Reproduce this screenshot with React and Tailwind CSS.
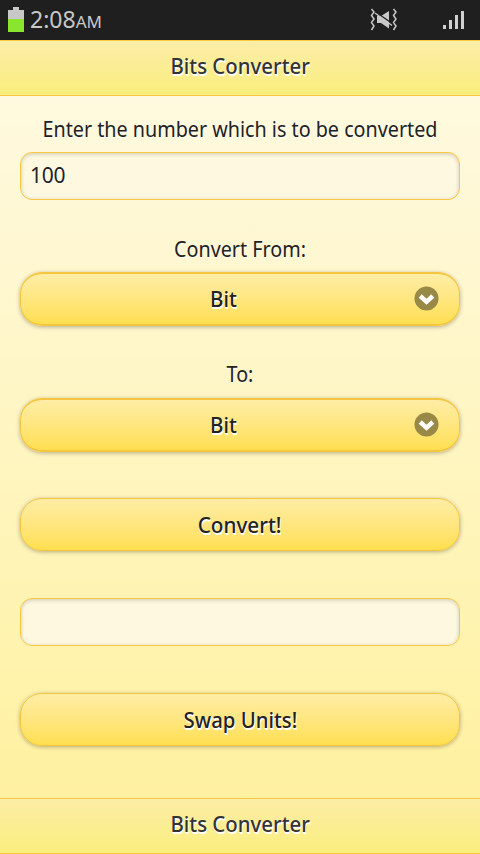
import { useState } from "react";

const buttonClass =
	"relative flex w-full items-center justify-center rounded-[22px] border-[#f4c63f] bg-gradient-to-b from-[#ffeda5] to-[#ffdf4f] text-[22px] font-medium text-[#222] shadow-[0_1px_4px_rgba(0,0,0,0.3)] [text-shadow:0_1px_0_#fff,1px_2px_0_#fff]";

const inputClass =
	"block h-12 w-full rounded-[12px] border border-[#f7c942] bg-[#fff8e0] px-[9px] pb-[2px] text-[21px] tracking-[-0.2px] text-[#222] shadow-[inset_0_1px_4px_rgba(0,0,0,0.2)] outline-none [text-shadow:0_1px_0_#fff]";

function StatusBar() {
	return (
		<div className="flex h-10 items-start bg-[#1f1f1f] text-[#c8c8c8]">
			<svg className="ml-2 mt-[7px]" width="16" height="25" shapeRendering="crispEdges">
				<path d="M5 0h6v3h5v9H0V3h5z" fill="#c8c8c8" />
				<path d="M0 12h16v13H0z" fill="#8ae52f" />
			</svg>
			<span className="ml-1.5 mt-[3px] text-[23px] leading-8">
				2:08<span className="text-[17px]">AM</span>
			</span>
			<svg
				className="ml-auto mt-[8px]"
				width="28"
				height="24"
				fill="none"
				stroke="#c8c8c8"
				strokeWidth="1.5"
			>
				<path d="M1.5 1l2.5 3-2.5 3.5 2.5 3.5-2.5 3.5 2.5 3.5-2.5 4M23.5 1l2.5 3-2.5 3.5 2.5 3.5-2.5 3.5 2.5 3.5-2.5 4" />
				<path d="M7 8h4l8-5v17.5L11 15H7z" fill="#c8c8c8" stroke="none" />
				<path d="M7 5l16 11" stroke="#1f1f1f" strokeWidth="1.5" />
				<path d="M5 5l17 12.5" />
			</svg>
			<svg className="ml-[45px] mr-4 mt-[11px]" width="21" height="18" fill="#d0d0d0">
				<path d="M0 14h3v4H0zM6 9h3v9H6zM12 4h3v14h-3zM18 0h3v18h-3z" />
			</svg>
		</div>
	);
}

function TitleBar({ as: Tag, children }) {
	return (
		<Tag className="flex h-14 items-center justify-center border-y border-[#f7c942] bg-gradient-to-b from-[#fceda7] to-[#faee7c] pb-1.5 text-[22px] font-medium text-[#333] [text-shadow:0_1px_0_#fff,1px_2px_0_#fff]">
			<span className="scale-x-[0.927]">{children}</span>
		</Tag>
	);
}

function FieldLabel({ children }) {
	return (
		<span className="block scale-x-[0.94] whitespace-nowrap text-center text-[21px] leading-7 text-[#222] [text-shadow:0_1px_0_#fff]">
			{children}
		</span>
	);
}

function UnitButton({ unit }) {
	return (
		<button type="button" className={`${buttonClass} h-[54px] border-x border-y-2 pb-[2px] pr-[34px]`}>
			<span className="scale-x-[0.93]">{unit}</span>
			<svg className="absolute right-[19px] top-[11px]" width="27" height="27">
				<circle cx="13.5" cy="13.5" r="12" fill="#988947" />
				<path d="M7.2 11l6.3 5.8 6.3-5.8" fill="none" stroke="#fff" strokeWidth="4.5" />
			</svg>
		</button>
	);
}

export default function App() {
	const [number, setNumber] = useState("100");
	const [result, setResult] = useState("");

	return (
		<div className="flex h-[854px] w-[480px] flex-col overflow-hidden font-['Noto_Sans',sans-serif]">
			<StatusBar />
			<TitleBar as="header">Bits Converter</TitleBar>
			<main className="flex-1 bg-gradient-to-b from-[#fff9df] to-[#fff1a0] px-5 pt-[19px]">
				<FieldLabel>Enter the number which is to be converted</FieldLabel>
				<input
					className={`${inputClass} mt-[9px]`}
					value={number}
					onChange={(e) => setNumber(e.target.value)}
				/>
				<div className="mt-[35px]">
					<FieldLabel>Convert From:</FieldLabel>
				</div>
				<div className="mt-[9px]">
					<UnitButton unit="Bit" />
				</div>
				<div className="mt-[34px]">
					<FieldLabel>To:</FieldLabel>
				</div>
				<div className="mt-[10px]">
					<UnitButton unit="Bit" />
				</div>
				<button
					type="button"
					className={`${buttonClass} mt-[46px] h-[53px] border`}
					onClick={() => setResult(number)}
				>
					<span className="scale-x-[0.94]">Convert!</span>
				</button>
				<input className={`${inputClass} mt-[47px]`} value={result} readOnly />
				<button type="button" className={`${buttonClass} mt-[47px] h-[53px] border`}>
					<span className="scale-x-[0.925]">Swap Units!</span>
				</button>
			</main>
			<TitleBar as="footer">Bits Converter</TitleBar>
		</div>
	);
}
